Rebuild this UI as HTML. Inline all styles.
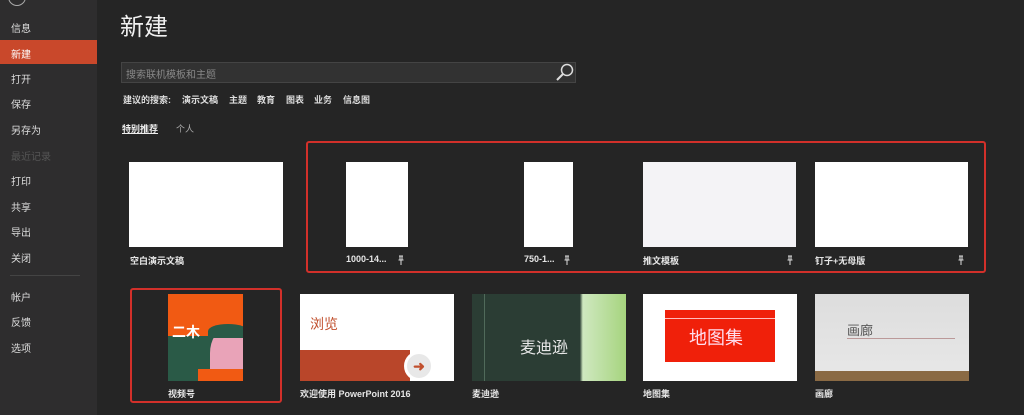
<!DOCTYPE html>
<html><head><meta charset="utf-8"><style>
*{margin:0;padding:0;box-sizing:border-box}
body{width:1024px;height:415px;background:#252525;font-family:"Liberation Sans","Noto Sans CJK SC",sans-serif;color:#ddd;position:relative;overflow:hidden}
.side{position:absolute;left:0;top:0;width:97px;height:415px;background:#2e2d2e}
.si{position:absolute;left:11px;font-size:10px;color:#ddd}
.act{position:absolute;left:0;top:40px;width:97px;height:24px;background:#c9482b}
.a{position:absolute}
.t{position:absolute;background:#fff}
.lb{position:absolute;font-size:9px;font-weight:bold;color:#e6e6e6;white-space:nowrap}
.rb{position:absolute;border:2px solid #d2302a;border-radius:3px}
.sg{position:absolute;top:93px;font-size:9px;font-weight:bold;color:#ddd;white-space:nowrap}
.pin{position:absolute;width:3px;height:9px}
</style></head><body>
<div class="side">
<div class="a" style="left:8px;top:-12px;width:18px;height:18px;border:1px solid #aaa;border-radius:50%"></div>
<div class="act"></div>
<div class="si" style="top:20px">信息</div>
<div class="si" style="top:46px;color:#fff">新建</div>
<div class="si" style="top:71px">打开</div>
<div class="si" style="top:96px">保存</div>
<div class="si" style="top:122px">另存为</div>
<div class="si" style="top:148px;color:#555">最近记录</div>
<div class="si" style="top:173px">打印</div>
<div class="si" style="top:199px">共享</div>
<div class="si" style="top:224px">导出</div>
<div class="si" style="top:250px">关闭</div>
<div class="a" style="left:10px;top:275px;width:70px;height:1px;background:#444"></div>
<div class="si" style="top:289px">帐户</div>
<div class="si" style="top:314px">反馈</div>
<div class="si" style="top:340px">选项</div>
</div>
<div class="a" style="left:120px;top:7px;font-size:24px;color:#f0f0f0">新建</div>
<div class="a" style="left:121px;top:62px;width:455px;height:21px;background:#323232;border:1px solid #444"></div>
<div class="a" style="left:126px;top:66px;font-size:10px;color:#888">搜索联机模板和主题</div>
<svg class="a" style="left:555px;top:62px" width="20" height="20"><circle cx="12" cy="8" r="5.5" stroke="#ddd" stroke-width="1.5" fill="none"/><line x1="8" y1="12" x2="2" y2="18" stroke="#ddd" stroke-width="2"/></svg>
<div class="sg" style="left:123px">建议的搜索:</div>
<div class="sg" style="left:182px">演示文稿</div>
<div class="sg" style="left:229px">主题</div>
<div class="sg" style="left:257px">教育</div>
<div class="sg" style="left:286px">图表</div>
<div class="sg" style="left:314px">业务</div>
<div class="sg" style="left:343px">信息图</div>
<div class="a" style="left:122px;top:122px;font-size:9px;font-weight:bold;color:#eee;text-decoration:underline">特别推荐</div>
<div class="a" style="left:176px;top:122px;font-size:9px;color:#aaa">个人</div>

<div class="t" style="left:129px;top:162px;width:154px;height:85px"></div>
<div class="lb" style="left:130px;top:254px">空白演示文稿</div>
<div class="rb" style="left:306px;top:141px;width:680px;height:132px"></div>
<div class="t" style="left:346px;top:162px;width:62px;height:85px"></div>
<div class="lb" style="left:346px;top:254px">1000-14...</div>
<div class="t" style="left:524px;top:162px;width:49px;height:85px"></div>
<div class="lb" style="left:524px;top:254px">750-1...</div>
<div class="t" style="left:643px;top:162px;width:153px;height:85px;background:#f4f3f6"></div>
<div class="lb" style="left:643px;top:254px">推文模板</div>
<div class="t" style="left:815px;top:162px;width:153px;height:85px"></div>
<div class="lb" style="left:815px;top:254px">钉子+无母版</div>
<svg class="a" style="left:398px;top:255px" width="6" height="10"><path d="M1 1h4M2 1v4M4 1v4M0.5 5h5M3 5v5" stroke="#ddd" stroke-width="1" fill="none"/></svg>
<svg class="a" style="left:564px;top:255px" width="6" height="10"><path d="M1 1h4M2 1v4M4 1v4M0.5 5h5M3 5v5" stroke="#ddd" stroke-width="1" fill="none"/></svg>
<svg class="a" style="left:787px;top:255px" width="6" height="10"><path d="M1 1h4M2 1v4M4 1v4M0.5 5h5M3 5v5" stroke="#ddd" stroke-width="1" fill="none"/></svg>
<svg class="a" style="left:958px;top:255px" width="6" height="10"><path d="M1 1h4M2 1v4M4 1v4M0.5 5h5M3 5v5" stroke="#ddd" stroke-width="1" fill="none"/></svg>

<div class="rb" style="left:130px;top:288px;width:152px;height:115px"></div>
<div class="a" style="left:168px;top:294px;width:75px;height:87px;background:#2a5a47;overflow:hidden">
<div class="a" style="left:0;top:0;width:75px;height:42px;background:#f15a13"></div>
<div class="a" style="left:4px;top:28px;font-size:14px;color:#fff;font-weight:bold">二木</div>
<div class="a" style="left:42px;top:35px;width:40px;height:60px;background:#e9a3b8;border-radius:40% 0 0 0"></div>
<div class="a" style="left:40px;top:30px;width:40px;height:14px;background:#2a5a47;border-radius:50% 50% 0 0"></div>
<div class="a" style="left:30px;top:75px;width:50px;height:15px;background:#f15a13"></div>
</div>
<div class="lb" style="left:168px;top:387px">视频号</div>

<div class="t" style="left:300px;top:294px;width:154px;height:87px">
<div class="a" style="left:10px;top:20px;font-size:14px;color:#c1502e">浏览</div>
<div class="a" style="left:0;top:56px;width:110px;height:31px;background:#b9462a"></div>
<div class="a" style="left:104px;top:57px;width:30px;height:30px;border-radius:50%;background:#e8e8e8;border:3px solid #fff;color:#c1502e;font-weight:bold;font-size:14px;text-align:center;line-height:24px">➜</div>
</div>
<div class="lb" style="left:300px;top:387px">欢迎使用 PowerPoint 2016</div>

<div class="a" style="left:472px;top:294px;width:154px;height:87px;background:linear-gradient(90deg,#2b3d34 0,#2b3d34 70%,#cfe8c0 72%,#a6d47e 100%)">
<div class="a" style="left:12px;top:0;width:1px;height:87px;background:#506a5a"></div>
<div class="a" style="left:48px;top:40px;font-size:16px;color:#e8e8e8">麦迪逊</div>
</div>
<div class="lb" style="left:472px;top:387px">麦迪逊</div>

<div class="t" style="left:643px;top:294px;width:154px;height:87px">
<div class="a" style="left:22px;top:16px;width:110px;height:52px;background:#f0200a"><div class="a" style="left:0;top:8px;width:110px;height:1px;background:#fbb"></div><div class="a" style="left:24px;top:14px;font-size:18px;color:#fde">地图集</div></div>
</div>
<div class="lb" style="left:643px;top:387px">地图集</div>

<div class="a" style="left:815px;top:294px;width:154px;height:87px;background:linear-gradient(#ddd,#e8e8e8)">
<div class="a" style="left:32px;top:26px;font-size:13px;color:#555">画廊</div>
<div class="a" style="left:32px;top:44px;width:108px;height:1px;background:#b99"></div>
<div class="a" style="left:0;top:77px;width:154px;height:10px;background:#8a6a44"></div>
</div>
<div class="lb" style="left:815px;top:387px">画廊</div>
</body></html>
